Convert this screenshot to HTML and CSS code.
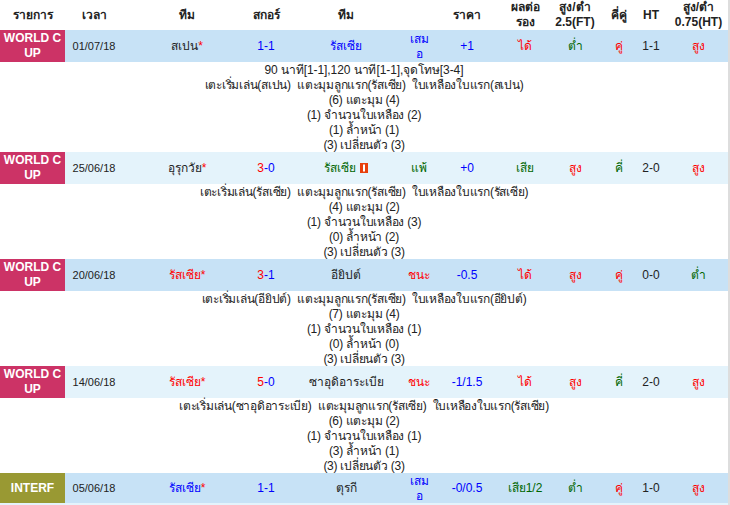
FILE: index.html
```html
<!DOCTYPE html>
<html lang="th">
<head>
<meta charset="utf-8">
<title>สถิติ</title>
<link rel="stylesheet" href="styles.css">
</head>
<body>
<table class="results">
<colgroup>
<col class="c-cat"><col class="c-time"><col class="c-home"><col class="c-score"><col class="c-away"><col class="c-res"><col class="c-price"><col class="c-hc"><col class="c-ou"><col class="c-oe"><col class="c-ht"><col class="c-ou2">
</colgroup>
<thead>
<tr>
<th>รายการ</th><th class="head-time">เวลา</th><th>ทีม</th><th>สกอร์</th><th>ทีม</th><th></th><th>ราคา</th><th>ผลต่อ<br>รอง</th><th>สูง/ต่ำ<br>2.5(FT)</th><th>คี่คู่</th><th>HT</th><th class="last">สูง/ต่ำ<br>0.75(HT)</th>
</tr>
</thead>
<tbody>
<tr class="match dark">
<td class="cat wc">WORLD C<br>UP</td><td class="time">01/07/18</td><td>สเปน<span class="red">*</span></td><td class="blue">1-1</td><td class="blue">รัสเซีย</td><td class="blue"><div class="draw">เสม<br>อ</div></td><td class="blue">+1</td><td class="red">ได้</td><td class="green">ต่ำ</td><td class="red">คู่</td><td>1-1</td><td class="red last">สูง</td>
</tr>
<tr class="detail"><td colspan="12"><div class="lines"><div class="ft">90 นาที[1-1],120 นาที[1-1],จุดโทษ[3-4]</div>เตะเริ่มเล่น(สเปน)&nbsp; แตะมุมลูกแรก(รัสเซีย)&nbsp; ใบเหลืองใบแรก(สเปน)<br>(6) แตะมุม (4)<br>(1) จำนวนใบเหลือง (2)<br>(1) ล้ำหน้า (1)<br>(3) เปลี่ยนตัว (3)</div></td></tr>
<tr class="match light">
<td class="cat wc">WORLD C<br>UP</td><td class="time">25/06/18</td><td>อุรุกวัย<span class="red">*</span></td><td><span class="red">3</span><span class="blue">-0</span></td><td class="green">รัสเซีย <svg class="card" viewBox="0 0 8 10" width="8" height="10"><rect width="8" height="10" fill="#e8400c"/><rect x="3" y="1.5" width="2" height="7" fill="#fff"/></svg></td><td class="green">แพ้</td><td class="blue">+0</td><td class="green">เสีย</td><td class="red">สูง</td><td class="green">คี่</td><td>2-0</td><td class="red last">สูง</td>
</tr>
<tr class="detail"><td colspan="12"><div class="lines">เตะเริ่มเล่น(รัสเซีย)&nbsp; แตะมุมลูกแรก(รัสเซีย)&nbsp; ใบเหลืองใบแรก(รัสเซีย)<br>(4) แตะมุม (2)<br>(1) จำนวนใบเหลือง (3)<br>(0) ล้ำหน้า (2)<br>(3) เปลี่ยนตัว (3)</div></td></tr>
<tr class="match dark">
<td class="cat wc">WORLD C<br>UP</td><td class="time">20/06/18</td><td class="red">รัสเซีย*</td><td><span class="red">3</span><span class="blue">-1</span></td><td>อียิปต์</td><td class="red">ชนะ</td><td class="blue">-0.5</td><td class="red">ได้</td><td class="red">สูง</td><td class="red">คู่</td><td>0-0</td><td class="green last">ต่ำ</td>
</tr>
<tr class="detail"><td colspan="12"><div class="lines">เตะเริ่มเล่น(อียิปต์)&nbsp; แตะมุมลูกแรก(รัสเซีย)&nbsp; ใบเหลืองใบแรก(อียิปต์)<br>(7) แตะมุม (4)<br>(1) จำนวนใบเหลือง (1)<br>(0) ล้ำหน้า (0)<br>(3) เปลี่ยนตัว (3)</div></td></tr>
<tr class="match light">
<td class="cat wc">WORLD C<br>UP</td><td class="time">14/06/18</td><td class="red">รัสเซีย*</td><td><span class="red">5</span><span class="blue">-0</span></td><td>ซาอุดิอาระเบีย</td><td class="red">ชนะ</td><td class="blue">-1/1.5</td><td class="red">ได้</td><td class="red">สูง</td><td class="green">คี่</td><td>2-0</td><td class="red last">สูง</td>
</tr>
<tr class="detail"><td colspan="12"><div class="lines">เตะเริ่มเล่น(ซาอุดิอาระเบีย)&nbsp; แตะมุมลูกแรก(รัสเซีย)&nbsp; ใบเหลืองใบแรก(รัสเซีย)<br>(6) แตะมุม (2)<br>(1) จำนวนใบเหลือง (1)<br>(3) ล้ำหน้า (1)<br>(3) เปลี่ยนตัว (3)</div></td></tr>
<tr class="match dark final">
<td class="cat intl">INTERF</td><td class="time">05/06/18</td><td class="blue">รัสเซีย<span class="red">*</span></td><td class="blue">1-1</td><td>ตุรกี</td><td class="blue"><div class="draw">เสม<br>อ</div></td><td class="blue">-0/0.5</td><td class="green">เสีย1/2</td><td class="green">ต่ำ</td><td class="red">คู่</td><td>1-0</td><td class="red last">สูง</td>
</tr>
</tbody>
</table>
<div class="tail"></div>
</body>
</html>
```
FILE: styles.css
```css
html, body { margin: 0; padding: 0; background: #fff; overflow: hidden; }
body { width: 728px; height: 505px; border-right: 2px solid #ddd; font-family: "Liberation Sans", Arial, "Noto Sans", sans-serif; font-size: 12px; color: #222; }
.results { width: 728px; table-layout: fixed; border-collapse: collapse; }
.results td, .results th { padding: 0; text-align: center; line-height: 15px; }
.results th { height: 30px; font-weight: bold; font-size: 12px; color: #222; }
.c-cat { width: 65px; } .c-time { width: 64px; } .c-home { width: 116px; } .c-score { width: 42px; }
.c-away { width: 118px; } .c-res { width: 28px; } .c-price { width: 68px; } .c-hc { width: 48px; }
.c-ou { width: 52px; } .c-oe { width: 36px; } .c-ht { width: 28px; } .c-ou2 { width: 63px; }
.results .head-time { padding-right: 6px; }
.results .time { padding-right: 6px; font-size: 11px; }
.results .last { padding-left: 4px; }
.match td { height: 32px; }
.final td { height: 30px; }
.draw { margin-top: 1px; margin-bottom: -1px; }
.dark td { background: #c7e2f6; }
.light td { background: #e4f3fb; }
.match .cat { color: #fff; font-weight: bold; font-size: 12px; line-height: 15px; }
.match .wc { background: #cc3366; }
.match .intl { background: #999933; }
.detail td { background: #fff; }
.lines { margin-top: 1px; margin-bottom: -1px; letter-spacing: -0.25px; }
.ft { letter-spacing: -0.08px; }
.tail { height: 2px; background: #e4f3fb; }
.red { color: #f00; }
.blue { color: #00f; }
.green { color: #060; }
.card { vertical-align: -1px; }
```
